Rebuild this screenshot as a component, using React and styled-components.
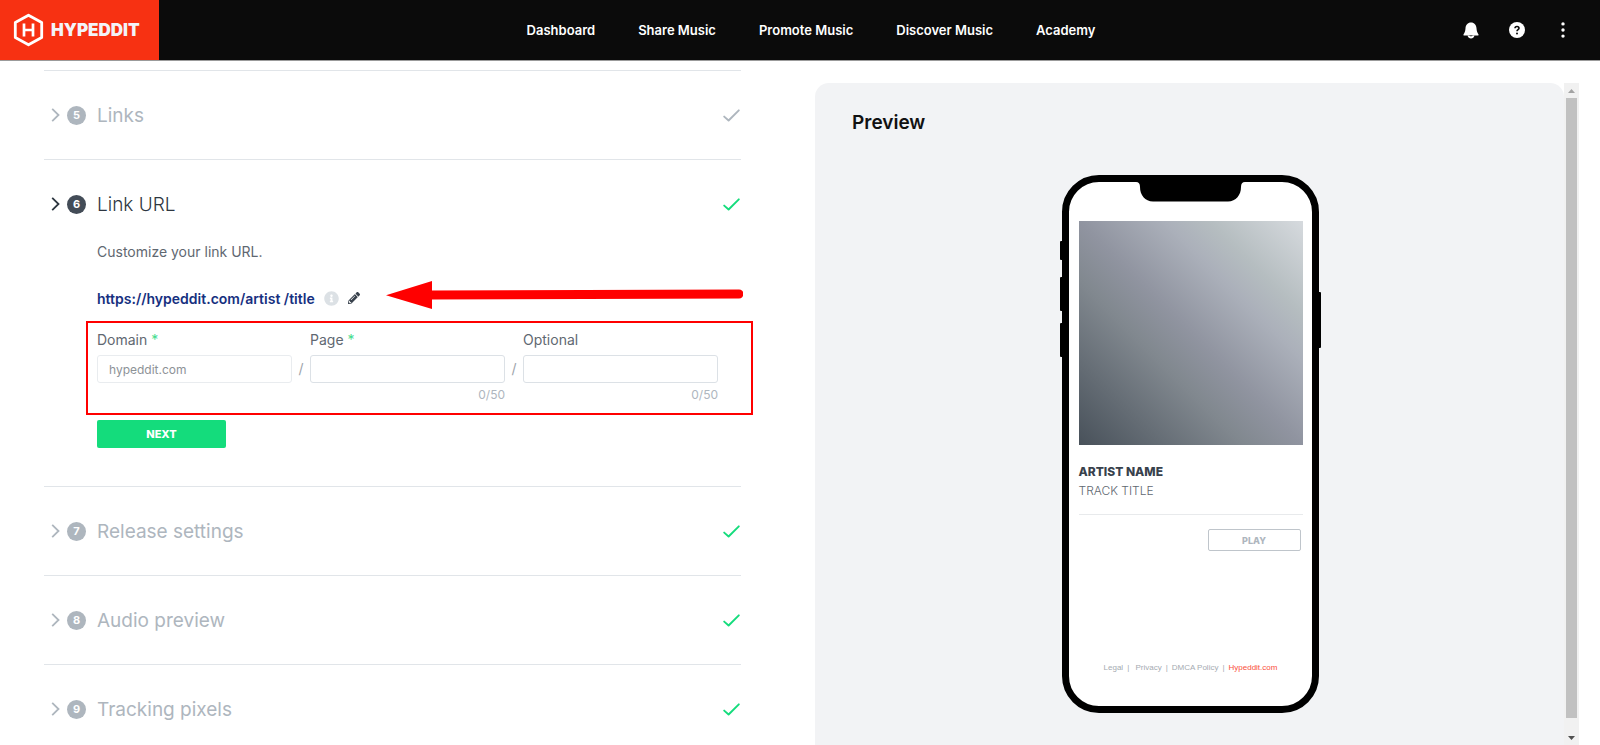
import React from 'react';
import styled, { createGlobalStyle } from 'styled-components';
import { FaInfoCircle, FaPencilAlt } from 'react-icons/fa';

const GlobalStyle = createGlobalStyle`
  * {
    box-sizing: border-box;
  }

  body {
    margin: 0;
    background: #ffffff;
    color: #434c57;
    font-family: Inter, sans-serif;
    font-size: 14px;
    overflow: hidden;
  }

  button, input {
    font-family: inherit;
  }
`;

const Page = styled.div`
  display: flex;
  flex-direction: column;
  height: 100vh;
`;

const Header = styled.header`
  display: flex;
  align-items: stretch;
  flex: none;
  height: 61px;
  background: #0b0b0b;
  border-bottom: 1px solid #9b9b9b;
`;

const Brand = styled.a`
  display: flex;
  align-items: center;
  gap: 7px;
  width: 159px;
  padding-left: 13px;
  background: #f73112;
  color: #f3f3f8;
  font-size: 17px;
  font-weight: 900;
  text-decoration: none;
`;

const Nav = styled.nav`
  display: flex;
  flex: 1;
  align-items: center;
  justify-content: center;
  gap: 43px;
`;

const NavLink = styled.a`
  color: #ffffff;
  font-size: 13px;
  font-weight: 600;
  text-decoration: none;
  white-space: nowrap;
`;

const HeaderActions = styled.div`
  display: flex;
  align-items: center;
  gap: 30px;
  padding-right: 29px;
`;

const IconButton = styled.button`
  display: flex;
  padding: 0;
  border: none;
  background: none;
  color: ${props => props.$color || '#ffffff'};
  cursor: pointer;
`;

const Main = styled.main`
  display: grid;
  grid-template-columns: 697fr 764fr;
  gap: 74px;
  flex: 1;
  min-height: 0;
  padding: 0 21px 0 44px;
`;

const Steps = styled.div`
  padding-top: 9px;
  min-height: 0;
  min-width: 0;
`;

const Step = styled.section`
  border-top: 1px solid #e1e5e9;
`;

const StepHeading = styled.h2`
  margin: 0;
  font-size: 19px;
  font-weight: 400;
`;

const StepToggle = styled.button`
  display: flex;
  align-items: center;
  width: 100%;
  height: 88px;
  padding: 0 1px 0 7px;
  border: none;
  background: none;
  color: ${props => (props.$open ? '#2d3640' : '#aeb6be')};
  font-size: inherit;
  font-weight: ${props => (props.$open ? 300 : 400)};
  text-align: left;
  cursor: pointer;
`;

const StepNumber = styled.span`
  display: flex;
  align-items: center;
  justify-content: center;
  width: 19px;
  height: 19px;
  margin: 0 11px 0 7px;
  border-radius: 50%;
  background: ${props => (props.$open ? '#434c57' : '#aeb6be')};
  color: #ffffff;
  font-size: 11px;
  font-weight: 700;
`;

const StepTitle = styled.span`
  flex: 1;
`;

const StepBody = styled.div`
  margin-top: -6px;
  padding: 0 23px 38px 53px;
`;

const Intro = styled.p`
  margin: 0;
  line-height: 20px;
  color: #5f6871;
`;

const UrlRow = styled.div`
  position: relative;
  display: flex;
  align-items: center;
  gap: 9px;
  height: 28px;
  margin-top: 22px;
`;

const UrlText = styled.span`
  color: #16307f;
  font-weight: 600;
`;

const ArrowMark = styled.svg`
  position: absolute;
  top: -4px;
  left: 289px;
  width: calc(100% - 264px);
  height: 30px;
`;

const Fields = styled.div`
  position: relative;
  display: grid;
  grid-template-columns: 1fr 18px 1fr 18px 1fr;
  margin-top: 18px;
`;

const FieldsOutline = styled.div`
  position: absolute;
  inset: -9px -35px -12px -11px;
  border: 2px solid #ff0000;
  pointer-events: none;
`;

const Field = styled.div`
  display: flex;
  flex-direction: column;
`;

const FieldLabel = styled.label`
  height: 25px;
  line-height: 20px;
  color: #5f6871;
`;

const Required = styled.span`
  color: #43dc8d;
`;

const TextInput = styled.input`
  width: 100%;
  height: 28px;
  padding: 0 11px;
  border: 1px solid #dce1e6;
  border-radius: 3px;
  background: #ffffff;
  color: #8d9297;
  font-size: 12px;

  &:disabled {
    border-color: #e9ecef;
  }
`;

const Counter = styled.span`
  height: 20px;
  line-height: 24px;
  color: #aeb6be;
  font-size: 12px;
  text-align: right;
`;

const Slash = styled.span`
  padding-top: 25px;
  line-height: 28px;
  color: #9da4ab;
  text-align: center;
`;

const NextButton = styled.button`
  display: block;
  width: 129px;
  height: 28px;
  margin-top: 17px;
  border: none;
  border-radius: 2px;
  background: #14dc7c;
  color: #ffffff;
  font-size: 11px;
  font-weight: 800;
  cursor: pointer;
`;

const PreviewPane = styled.div`
  display: flex;
  min-height: 0;
  min-width: 0;
  padding-top: 22px;
`;

const PreviewPanel = styled.section`
  display: flex;
  flex: 1;
  flex-direction: column;
  align-items: center;
  padding: 28px 36px 0 37px;
  overflow: hidden;
  border-radius: 14px 14px 0 0;
  background: #f2f3f5;
`;

const PreviewTitle = styled.h2`
  align-self: flex-start;
  margin: 0 0 40px;
  color: #111111;
  font-size: 19px;
  font-weight: 600;
  line-height: 24px;
`;

const Scrollbar = styled.div`
  display: flex;
  flex-direction: column;
  flex: none;
  width: 15px;
  background: #f1f1f1;
`;

const ScrollStep = styled.button`
  display: flex;
  align-items: center;
  justify-content: center;
  flex: none;
  height: 15px;
  padding: 0;
  border: none;
  background: none;
  color: ${props => props.$color};
`;

const ScrollThumb = styled.div`
  flex: 1;
  margin: 0 2px 12px;
  background: #c1c1c1;
`;

const Phone = styled.div`
  position: relative;
  display: flex;
  flex-direction: column;
  flex: none;
  width: 257px;
  height: 538px;
  padding: 39px 9px 33px 10px;
  border: 7px solid #000000;
  border-radius: 37px;
  background: #ffffff;
`;

const Notch = styled.svg`
  position: absolute;
  top: -1px;
  left: 67px;
`;

const SideKey = styled.span`
  position: absolute;
  top: ${props => props.$top};
  ${props => props.$side}: -9px;
  width: 3px;
  height: ${props => props.$height};
  border-radius: 1px;
  background: #000000;
`;

const Artwork = styled.div`
  aspect-ratio: 1;
  background: linear-gradient(45deg, #48515a 0%, #81888f 37%, #9094a0 50%, #abb0ba 69%, #b5bdc0 79%, #d6dade 100%);
`;

const ArtistName = styled.h3`
  margin: 17px 0 0;
  color: #38414c;
  font-size: 12px;
  font-weight: 800;
  line-height: 20px;
`;

const TrackTitle = styled.p`
  margin: 0;
  padding-bottom: 15px;
  border-bottom: 1px solid #e8eaec;
  color: #5f6871;
  font-size: 12px;
  font-weight: 300;
  line-height: 17px;
`;

const PlayButton = styled.button`
  align-self: flex-end;
  width: 93px;
  height: 22px;
  margin: 14px 2px 0 0;
  border: 1px solid #bfc5cb;
  border-radius: 2px;
  background: #ffffff;
  color: #aeb6be;
  font-size: 9px;
  font-weight: 800;
  cursor: pointer;
`;

const Legal = styled.footer`
  display: flex;
  justify-content: center;
  gap: 4px;
  margin-top: auto;
  color: #a5abb2;
  font-family: "Liberation Sans", Arial, sans-serif;
  font-size: 8px;
  line-height: 10px;
  white-space: nowrap;
`;

const LegalLink = styled.a`
  color: ${props => (props.$accent ? '#f9503c' : 'inherit')};
  text-decoration: none;
`;

const navItems = ['Dashboard', 'Share Music', 'Promote Music', 'Discover Music', 'Academy'];

const steps = [
  { number: 5, title: 'Links', done: false },
  { number: 6, title: 'Link URL', done: true, open: true },
  { number: 7, title: 'Release settings', done: true },
  { number: 8, title: 'Audio preview', done: true },
  { number: 9, title: 'Tracking pixels', done: true }
];

const LogoMark = () => (
  <svg width="31" height="34" viewBox="0 0 31 34" fill="none" stroke="#ffffff" strokeLinejoin="round" aria-hidden="true">
    <path d="M15.5 2.2 28.7 9.500V24.500L15.5 31.800 2.300 24.500V9.500Z" strokeWidth="2.800" />
    <path d="M11 10.500V23.500M20 10.500V23.500M11 17H20" strokeWidth="2.700" />
  </svg>
);

const BellIcon = () => (
  <svg width="16" height="17" viewBox="0 0 16 17" aria-hidden="true">
    <path d="M8 .5C4.700.5 2.700 3 2.500 6.200 2.300 9.300 1.700 10.700.6 12.200.2 12.900.6 13.500 1.200 13.500H14.800C15.400 13.500 15.800 12.900 15.400 12.200 14.300 10.700 13.700 9.300 13.500 6.200 13.300 3 11.300.5 8 .5Z" fill="currentColor" />
    <path d="M4.500 13.500C5 15.600 6.300 16.500 8 16.500S11 15.600 11.500 13.500Z" fill="currentColor" />
    <path d="M6.200 13.500C6.700 14.600 9.300 14.600 9.800 13.500Z" fill="#0b0b0b" />
  </svg>
);

const HelpIcon = () => (
  <svg width="16" height="16" viewBox="0 0 16 16" aria-hidden="true">
    <circle cx="8" cy="8" r="8" fill="currentColor" />
    <path d="M6 6.300C6 3.800 10 3.900 10 6.200 10 7.500 8 7.700 8 9.200" fill="none" stroke="#0b0b0b" strokeWidth="1.600" />
    <circle cx="8" cy="11.500" r="1" fill="#0b0b0b" />
  </svg>
);

const MoreIcon = () => (
  <svg width="16" height="16" viewBox="0 0 16 16" fill="currentColor" aria-hidden="true">
    <circle cx="8" cy="1.900" r="1.700" />
    <circle cx="8" cy="8" r="1.700" />
    <circle cx="8" cy="14.100" r="1.700" />
  </svg>
);

const Chevron = () => (
  <svg width="9" height="14" viewBox="0 0 9 14" fill="none" stroke="currentColor" strokeWidth="1.800" aria-hidden="true">
    <path d="M1.200.9 7.500 7 1.200 13.100" />
  </svg>
);

const Check = ({ done }) => (
  <svg width="17" height="13" viewBox="0 0 17 13" fill="none" stroke={done ? '#14dc7c' : '#aeb6be'} strokeWidth="1.900" strokeLinecap="round" strokeLinejoin="round" aria-hidden="true">
    <path d="M1.200 7.600 5.600 11.500 15.800 1.300" />
  </svg>
);

const Arrow = () => (
  <ArrowMark viewBox="0 0 357 30" preserveAspectRatio="none" fill="#ff0000" aria-hidden="true">
    <path d="M0 15.200 46 1V10.500L353 9.500A4.500 4.500 0 0 1 353 18.500L46 19.500V29Z" />
  </ArrowMark>
);

const LinkUrlForm = () => (
  <StepBody>
    <Intro>Customize your link URL.</Intro>
    <UrlRow>
      <UrlText>https://hypeddit.com/artist /title</UrlText>
      <IconButton type="button" $color="#dce1e5" aria-label="URL information">
        <FaInfoCircle size={15} />
      </IconButton>
      <IconButton type="button" $color="#38414c" aria-label="Edit URL">
        <FaPencilAlt size={12} />
      </IconButton>
      <Arrow />
    </UrlRow>
    <Fields>
      <FieldsOutline />
      <Field>
        <FieldLabel htmlFor="domain">Domain <Required>*</Required></FieldLabel>
        <TextInput id="domain" defaultValue="hypeddit.com" disabled />
      </Field>
      <Slash>/</Slash>
      <Field>
        <FieldLabel htmlFor="page">Page <Required>*</Required></FieldLabel>
        <TextInput id="page" maxLength={50} />
        <Counter>0/50</Counter>
      </Field>
      <Slash>/</Slash>
      <Field>
        <FieldLabel htmlFor="optional">Optional</FieldLabel>
        <TextInput id="optional" maxLength={50} />
        <Counter>0/50</Counter>
      </Field>
    </Fields>
    <NextButton type="button">NEXT</NextButton>
  </StepBody>
);

const PhonePreview = () => (
  <Phone>
    <Notch width="109" height="21" viewBox="0 0 109 21" aria-hidden="true">
      <path d="M0 0H109V1Q105 1 105 6C105 14 100 20.500 92 20.500H17C9 20.500 4 14 4 6Q4 1 0 1Z" />
    </Notch>
    <SideKey $side="left" $top="59px" $height="19px" />
    <SideKey $side="left" $top="95px" $height="34px" />
    <SideKey $side="left" $top="141px" $height="34px" />
    <SideKey $side="right" $top="110px" $height="56px" />
    <Artwork />
    <ArtistName>ARTIST NAME</ArtistName>
    <TrackTitle>TRACK TITLE</TrackTitle>
    <PlayButton type="button">PLAY</PlayButton>
    <Legal>
      <LegalLink href="#legal">Legal</LegalLink>
      <span>|&nbsp;</span>
      <LegalLink href="#privacy">Privacy</LegalLink>
      <span>|</span>
      <LegalLink href="#dmca">DMCA Policy</LegalLink>
      <span>|</span>
      <LegalLink href="#home" $accent>Hypeddit.com</LegalLink>
    </Legal>
  </Phone>
);

const App = () => (
  <Page>
    <GlobalStyle />
    <Header>
      <Brand href="#home">
        <LogoMark />
        HYPEDDIT
      </Brand>
      <Nav>
        {navItems.map(item => (
          <NavLink key={item} href="#">{item}</NavLink>
        ))}
      </Nav>
      <HeaderActions>
        <IconButton type="button" aria-label="Notifications"><BellIcon /></IconButton>
        <IconButton type="button" aria-label="Help"><HelpIcon /></IconButton>
        <IconButton type="button" aria-label="More"><MoreIcon /></IconButton>
      </HeaderActions>
    </Header>
    <Main>
      <Steps>
        {steps.map(step => (
          <Step key={step.number}>
            <StepHeading>
              <StepToggle type="button" $open={step.open} aria-expanded={!!step.open}>
                <Chevron />
                <StepNumber $open={step.open}>{step.number}</StepNumber>
                <StepTitle>{step.title}</StepTitle>
                <Check done={step.done} />
              </StepToggle>
            </StepHeading>
            {step.open && <LinkUrlForm />}
          </Step>
        ))}
      </Steps>
      <PreviewPane>
        <PreviewPanel>
          <PreviewTitle>Preview</PreviewTitle>
          <PhonePreview />
        </PreviewPanel>
        <Scrollbar>
          <ScrollStep type="button" $color="#a3a3a3" aria-label="Scroll up">
            <svg width="7" height="4" viewBox="0 0 7 4" fill="currentColor"><path d="M0 4 3.500 0 7 4Z" /></svg>
          </ScrollStep>
          <ScrollThumb />
          <ScrollStep type="button" $color="#505050" aria-label="Scroll down">
            <svg width="7" height="4" viewBox="0 0 7 4" fill="currentColor"><path d="M0 0 3.500 4 7 0Z" /></svg>
          </ScrollStep>
        </Scrollbar>
      </PreviewPane>
    </Main>
  </Page>
);

export default App;
